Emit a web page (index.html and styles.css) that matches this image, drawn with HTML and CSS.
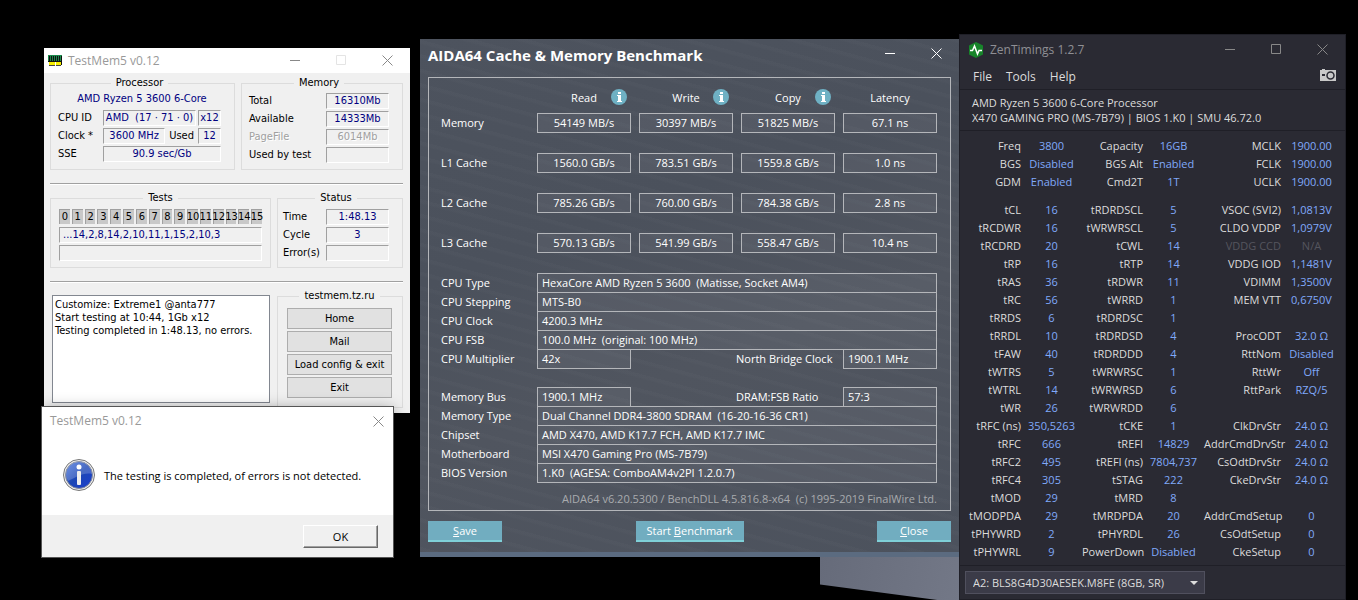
FILE: index.html
```html
<!DOCTYPE html>
<html lang="en">
<head>
    <meta charset="UTF-8">
    <meta name="viewport" content="width=device-width, initial-scale=1.0">
    <title>Desktop</title>
    <link rel="stylesheet" href="styles.css">
</head>
<body>
    <div class="wallpaper-shape"></div>

    <!-- TestMem5 -->
    <section class="window testmem">
        <header class="tm-titlebar">
            <svg class="tm-icon" width="14" height="11" viewBox="0 0 14 11">
                <path fill="#1b8a4c" d="M0 0h14v7H0z"/>
                <path fill="#111" d="M1 1h1v6H1zM3 1h1v6H3zM5 1h1v6H5zM7 1h1v6H7zM9 1h1v6H9zM11 1h1v6h-1zM0 6h14v1H0zM13 1h1v9h-1z"/>
                <path fill="#f5ee00" d="M1 7h6v3H1zM8 7h5v3H8z"/>
                <path fill="#444" d="M1 10h6v1H1zM8 10h5v1H8z"/>
            </svg>
            <span class="tm-title">TestMem5 v0.12</span>
            <button class="win-btn" aria-label="Minimize"><svg width="11" height="11"><path d="M0 5.500h10"/></svg></button>
            <button class="win-btn faint" aria-label="Maximize"><svg width="11" height="11"><path d="M.5.5h9v9h-9z"/></svg></button>
            <button class="win-btn" aria-label="Close"><svg width="11" height="11"><path d="M.5.5l10 10M10.500.5l-10 10"/></svg></button>
        </header>
        <div class="tm-body">
            <div class="tm-row">
                <fieldset class="processor">
                    <legend>Processor</legend>
                    <div class="cpu-name">AMD Ryzen 5 3600 6-Core</div>
                    <div class="tm-line"><span class="tm-label">CPU ID</span><span class="sunken grow">AMD&nbsp; (17 · 71 · 0)</span><span class="sunken small">x12</span></div>
                    <div class="tm-line"><span class="tm-label">Clock *</span><span class="sunken grow">3600 MHz</span><span class="used">Used</span><span class="sunken small">12</span></div>
                    <div class="tm-line"><span class="tm-label">SSE</span><span class="sunken grow">90.9 sec/Gb</span></div>
                </fieldset>
                <fieldset class="memory">
                    <legend>Memory</legend>
                    <div class="tm-line"><span>Total</span><span class="sunken value">16310Mb</span></div>
                    <div class="tm-line"><span>Available</span><span class="sunken value">14333Mb</span></div>
                    <div class="tm-line disabled"><span>PageFile</span><span class="sunken value">6014Mb</span></div>
                    <div class="tm-line"><span>Used by test</span><span class="sunken value"></span></div>
                </fieldset>
            </div>
            <hr>
            <div class="tm-row">
                <fieldset class="tests">
                    <legend>Tests</legend>
                    <div class="test-cells">
                        <span>0</span><span>1</span><span>2</span><span>3</span><span>4</span><span>5</span><span>6</span><span>7</span><span>8</span><span>9</span><span>10</span><span>11</span><span>12</span><span>13</span><span>14</span><span>15</span>
                    </div>
                    <div class="sunken sequence">...14,2,8,14,2,10,11,1,15,2,10,3</div>
                    <div class="sunken sequence"></div>
                </fieldset>
                <fieldset class="status">
                    <legend>Status</legend>
                    <div class="tm-line"><span>Time</span><span class="sunken value">1:48.13</span></div>
                    <div class="tm-line"><span>Cycle</span><span class="sunken value">3</span></div>
                    <div class="tm-line"><span>Error(s)</span><span class="sunken value"></span></div>
                </fieldset>
            </div>
            <hr>
            <div class="tm-row">
                <textarea class="log" aria-label="Log" readonly>Customize: Extreme1 @anta777
Start testing at 10:44, 1Gb x12
Testing completed in 1:48.13, no errors.</textarea>
                <fieldset class="links">
                    <legend>testmem.tz.ru</legend>
                    <button>Home</button>
                    <button>Mail</button>
                    <button>Load config &amp; exit</button>
                    <button>Exit</button>
                </fieldset>
            </div>
        </div>
    </section>

    <!-- Message box -->
    <section class="window msgbox">
        <header class="msg-titlebar">
            <span class="tm-title">TestMem5 v0.12</span>
            <button class="win-btn" aria-label="Close"><svg width="11" height="11"><path d="M.5.5l10 10M10.500.5l-10 10"/></svg></button>
        </header>
        <div class="msg-body">
            <svg width="32" height="32" viewBox="0 0 32 32">
                <defs>
                    <linearGradient id="ball" x1="0" y1="0" x2="1" y2="1">
                        <stop offset="0" stop-color="#4a78e0"/>
                        <stop offset=".5" stop-color="#1c46b4"/>
                        <stop offset="1" stop-color="#1d3fd0"/>
                    </linearGradient>
                </defs>
                <circle cx="16" cy="16" r="15.500" fill="#eee" stroke="#777"/>
                <circle cx="16" cy="16" r="13.500" fill="url(#ball)" stroke="#8a8f9c"/>
                <path fill="#fff" fill-opacity=".2" d="M3 16a13 13 0 0 1 26-1c-9-2-17 4-24 7a13 13 0 0 1-2-6z"/>
                <circle cx="16" cy="8" r="2.500" fill="#fff"/>
                <rect x="14" y="12" width="4" height="14" rx="1" fill="#eee"/>
            </svg>
            <span>The testing is completed, of errors is not detected.</span>
        </div>
        <footer class="msg-footer"><button>OK</button></footer>
    </section>

    <!-- AIDA64 -->
    <section class="window aida">
        <header class="aida-titlebar">
            <h1>AIDA64 Cache &amp; Memory Benchmark</h1>
            <button class="win-btn" aria-label="Minimize"><svg width="11" height="11"><path d="M0 5.500h10"/></svg></button>
            <button class="win-btn" aria-label="Close"><svg width="11" height="11"><path d="M.5.5l10 10M10.500.5l-10 10"/></svg></button>
        </header>
        <div class="aida-frame">
            <table class="bench">
                <thead>
                    <tr>
                        <td></td>
                        <th><div class="head"><span>Read</span><svg class="info" viewBox="0 0 16 16"><circle cx="8" cy="8" r="8"/><path d="M7 3h3v2H7zM6 6h4v6h1v1H6v-1h1V7H6z"/></svg></div></th>
                        <th><div class="head"><span>Write</span><svg class="info" viewBox="0 0 16 16"><circle cx="8" cy="8" r="8"/><path d="M7 3h3v2H7zM6 6h4v6h1v1H6v-1h1V7H6z"/></svg></div></th>
                        <th><div class="head"><span>Copy</span><svg class="info" viewBox="0 0 16 16"><circle cx="8" cy="8" r="8"/><path d="M7 3h3v2H7zM6 6h4v6h1v1H6v-1h1V7H6z"/></svg></div></th>
                        <th><div class="head"><span>Latency</span></div></th>
                    </tr>
                </thead>
                <tbody>
                    <tr><th>Memory</th><td><div>54149 MB/s</div></td><td><div>30397 MB/s</div></td><td><div>51825 MB/s</div></td><td><div>67.1 ns</div></td></tr>
                    <tr><th>L1 Cache</th><td><div>1560.0 GB/s</div></td><td><div>783.51 GB/s</div></td><td><div>1559.8 GB/s</div></td><td><div>1.0 ns</div></td></tr>
                    <tr><th>L2 Cache</th><td><div>785.26 GB/s</div></td><td><div>760.00 GB/s</div></td><td><div>784.38 GB/s</div></td><td><div>2.8 ns</div></td></tr>
                    <tr><th>L3 Cache</th><td><div>570.13 GB/s</div></td><td><div>541.99 GB/s</div></td><td><div>558.47 GB/s</div></td><td><div>10.4 ns</div></td></tr>
                </tbody>
            </table>
            <dl class="details">
                <div><dt>CPU Type</dt><dd>HexaCore AMD Ryzen 5 3600&nbsp; (Matisse, Socket AM4)</dd></div>
                <div><dt>CPU Stepping</dt><dd>MTS-B0</dd></div>
                <div><dt>CPU Clock</dt><dd>4200.3 MHz</dd></div>
                <div><dt>CPU FSB</dt><dd>100.0 MHz&nbsp; (original: 100 MHz)</dd></div>
                <div class="split"><dt>CPU Multiplier</dt><dd>42x</dd><dt>North Bridge Clock</dt><dd>1900.1 MHz</dd></div>
            </dl>
            <dl class="details">
                <div class="split"><dt>Memory Bus</dt><dd>1900.1 MHz</dd><dt>DRAM:FSB Ratio</dt><dd>57:3</dd></div>
                <div><dt>Memory Type</dt><dd>Dual Channel DDR4-3800 SDRAM&nbsp; (16-20-16-36 CR1)</dd></div>
                <div><dt>Chipset</dt><dd>AMD X470, AMD K17.7 FCH, AMD K17.7 IMC</dd></div>
                <div><dt>Motherboard</dt><dd>MSI X470 Gaming Pro (MS-7B79)</dd></div>
                <div><dt>BIOS Version</dt><dd>1.K0&nbsp; (AGESA: ComboAM4v2PI 1.2.0.7)</dd></div>
            </dl>
            <p class="version">AIDA64 v6.20.5300 / BenchDLL 4.5.816.8-x64&nbsp; (c) 1995-2019 FinalWire Ltd.</p>
        </div>
        <footer class="aida-footer">
            <button><u>S</u>ave</button>
            <button class="wide">Start <u>B</u>enchmark</button>
            <button><u>C</u>lose</button>
        </footer>
    </section>

    <!-- ZenTimings -->
    <section class="window zen">
        <header class="zen-titlebar">
            <svg width="16" height="16" viewBox="0 0 16 16">
                <path fill="#17842a" d="M8 0l7 3.500v9L8 16l-7-3.500v-9z"/>
                <path fill="none" stroke="#fff" stroke-width="1.500" d="M2 8.500h2.500L6.500 4l3 8 1.500-3.500h3"/>
            </svg>
            <span class="zen-title">ZenTimings 1.2.7</span>
            <button class="win-btn" aria-label="Minimize"><svg width="11" height="11"><path d="M0 5.500h10"/></svg></button>
            <button class="win-btn" aria-label="Maximize"><svg width="11" height="11"><path d="M.5.5h9v9h-9z"/></svg></button>
            <button class="win-btn" aria-label="Close"><svg width="11" height="11"><path d="M.5.5l10 10M10.500.5l-10 10"/></svg></button>
        </header>
        <nav class="zen-menu">
            <button>File</button>
            <button>Tools</button>
            <button>Help</button>
            <button class="camera" aria-label="Screenshot">
                <svg width="16" height="12" viewBox="0 0 16 12">
                    <path fill="#c8c8c8" d="M0 1h2V0h3v1h11v11H0z"/>
                    <path fill="#2a2a33" d="M2 5h3v2H2z"/>
                    <circle cx="10.500" cy="6.500" r="3.500" fill="#c8c8c8" stroke="#2a2a33" stroke-width="1.500"/>
                </svg>
            </button>
        </nav>
        <div class="zen-info">
            <div>AMD Ryzen 5 3600 6-Core Processor</div>
            <div>X470 GAMING PRO (MS-7B79) | BIOS 1.K0 | SMU 46.72.0</div>
        </div>
        <div class="zen-timings">
            <table>
                <tr><th>Freq</th><td>3800</td><th>Capacity</th><td>16GB</td><th class="last">MCLK</th><td>1900.00</td></tr>
                <tr><th>BGS</th><td>Disabled</td><th>BGS Alt</th><td>Enabled</td><th>FCLK</th><td>1900.00</td></tr>
                <tr><th>GDM</th><td>Enabled</td><th>Cmd2T</th><td>1T</td><th>UCLK</th><td>1900.00</td></tr>
            </table>
            <table>
                <tr><th>tCL</th><td>16</td><th>tRDRDSCL</th><td>5</td><th class="last">VSOC (SVI2)</th><td>1,0813V</td></tr>
                <tr><th>tRCDWR</th><td>16</td><th>tWRWRSCL</th><td>5</td><th>CLDO VDDP</th><td>1,0979V</td></tr>
                <tr><th>tRCDRD</th><td>20</td><th>tCWL</th><td>14</td><th class="off">VDDG CCD</th><td class="off">N/A</td></tr>
                <tr><th>tRP</th><td>16</td><th>tRTP</th><td>14</td><th>VDDG IOD</th><td>1,1481V</td></tr>
                <tr><th>tRAS</th><td>36</td><th>tRDWR</th><td>11</td><th>VDIMM</th><td>1,3500V</td></tr>
                <tr><th>tRC</th><td>56</td><th>tWRRD</th><td>1</td><th>MEM VTT</th><td>0,6750V</td></tr>
                <tr><th>tRRDS</th><td>6</td><th>tRDRDSC</th><td>1</td><td></td><td></td></tr>
                <tr><th>tRRDL</th><td>10</td><th>tRDRDSD</th><td>4</td><th>ProcODT</th><td>32.0 Ω</td></tr>
                <tr><th>tFAW</th><td>40</td><th>tRDRDDD</th><td>4</td><th>RttNom</th><td>Disabled</td></tr>
                <tr><th>tWTRS</th><td>5</td><th>tWRWRSC</th><td>1</td><th>RttWr</th><td>Off</td></tr>
                <tr><th>tWTRL</th><td>14</td><th>tWRWRSD</th><td>6</td><th>RttPark</th><td>RZQ/5</td></tr>
                <tr><th>tWR</th><td>26</td><th>tWRWRDD</th><td>6</td><td></td><td></td></tr>
                <tr><th>tRFC (ns)</th><td>350,5263</td><th>tCKE</th><td>1</td><th>ClkDrvStr</th><td>24.0 Ω</td></tr>
                <tr><th>tRFC</th><td>666</td><th>tREFI</th><td>14829</td><th>AddrCmdDrvStr</th><td>24.0 Ω</td></tr>
                <tr><th>tRFC2</th><td>495</td><th>tREFI (ns)</th><td>7804,737</td><th>CsOdtDrvStr</th><td>24.0 Ω</td></tr>
                <tr><th>tRFC4</th><td>305</td><th>tSTAG</th><td>222</td><th>CkeDrvStr</th><td>24.0 Ω</td></tr>
                <tr><th>tMOD</th><td>29</td><th>tMRD</th><td>8</td><td></td><td></td></tr>
                <tr><th>tMODPDA</th><td>29</td><th>tMRDPDA</th><td>20</td><th>AddrCmdSetup</th><td>0</td></tr>
                <tr><th>tPHYWRD</th><td>2</td><th>tPHYRDL</th><td>26</td><th>CsOdtSetup</th><td>0</td></tr>
                <tr><th>tPHYWRL</th><td>9</td><th>PowerDown</th><td>Disabled</td><th>CkeSetup</th><td>0</td></tr>
            </table>
        </div>
        <footer class="zen-footer">
            <div class="select-wrap">
                <select aria-label="Memory module">
                    <option>A2: BLS8G4D30AESEK.M8FE (8GB, SR)</option>
                </select>
            </div>
        </footer>
    </section>
</body>
</html>
```

FILE: styles.css
```css
* {
    box-sizing: border-box;
}
body {
    margin: 0;
    min-height: 100vh;
    overflow: hidden;
    background: #000;
    font-family: "Open Sans", sans-serif;
    font-size: 11px;
}
button, select, textarea {
    font: inherit;
    color: inherit;
    margin: 0;
    padding: 0;
}
.window {
    position: absolute;
}
.wallpaper-shape {
    position: absolute;
    left: 820px;
    top: 557px;
    width: 140px;
    height: 46px;
    background: linear-gradient(100deg, #666b7a, #737887);
    clip-path: polygon(0 0, 100% 0, 100% 100%, 0 60%);
}
.win-btn {
    display: flex;
    align-items: center;
    justify-content: center;
    width: 46px;
    height: 25px;
    border: 0;
    background: none;
    color: #888;
}
.win-btn svg {
    fill: none;
    stroke: currentColor;
}
.win-btn.faint {
    color: #e4e4e4;
}

/* TestMem5 */
.testmem {
    left: 44px;
    top: 48px;
    width: 366px;
    background: #f0f0f0;
    color: #000;
    font-family: "DejaVu Sans Condensed", "DejaVu Sans", sans-serif;
}
.tm-titlebar {
    display: flex;
    align-items: center;
    height: 25px;
    padding-left: 4px;
    background: #fff;
}
.tm-title {
    flex: 1;
    font-family: "Open Sans", sans-serif;
    font-size: 12px;
    line-height: 16px;
    color: #999;
}
.tm-icon + .tm-title {
    padding-left: 6px;
}
.tm-body {
    padding: 3px 7px 5px 6px;
}
.tm-row {
    display: flex;
    gap: 6px;
}
fieldset {
    min-width: 0;
    margin: 0;
    border: 1px solid #dcdcdc;
    padding: 0 13px 4px 7px;
}
legend {
    margin: 0 auto;
    padding: 0 5px;
    line-height: 14px;
}
.testmem hr {
    height: 2px;
    margin: 13px 0 6px;
    border: 0;
    border-top: 1px solid #a0a0a0;
    border-bottom: 1px solid #fff;
}
.processor {
    width: 185px;
}
.memory {
    flex: 1;
    padding-top: 3px;
}
.cpu-name {
    height: 20px;
    padding-left: 5px;
    line-height: 18px;
    text-align: center;
    color: #000080;
}
.tm-line {
    display: flex;
    justify-content: space-between;
    gap: 2px;
    height: 18px;
    line-height: 16px;
    white-space: nowrap;
}
.tm-label {
    width: 43px;
}
.used {
    padding: 0 2px;
}
.sunken {
    height: 16px;
    border: 1px solid;
    border-color: #a0a0a0 #fff #fff #a0a0a0;
    line-height: 14px;
    text-align: center;
    color: #000080;
}
.grow {
    flex: 1;
}
.small {
    width: 23px;
}
.value {
    width: 63px;
}
.disabled, .disabled .sunken {
    color: #a0a0a0;
}
.disabled {
    text-shadow: 1px 1px #fff;
}
.tests {
    width: 221px;
    padding: 4px 8px;
}
.status {
    flex: 1;
    padding: 4px 13px 4px 5px;
}
.test-cells {
    display: grid;
    grid-template-columns: repeat(16, minmax(0, 1fr));
    gap: 2px;
    height: 18px;
}
.test-cells span {
    display: flex;
    justify-content: center;
    height: 15px;
    border-left: 1px solid #a0a0a0;
    border-top: 1px solid #a0a0a0;
    background: #c8c8c8;
    line-height: 14px;
}
.sequence {
    margin-bottom: 2px;
    padding-left: 3px;
    text-align: left;
}
.log {
    width: 218px;
    height: 108px;
    margin: 6px 1px 0 2px;
    border: 1px solid #828790;
    padding: 2px;
    resize: none;
    background: #fff;
    line-height: 13px;
    white-space: pre;
    overflow: hidden;
}
.links {
    flex: 1;
    display: flex;
    flex-direction: column;
    gap: 2px;
    padding: 5px 10px 9px 9px;
}
.links button {
    width: 100%;
    height: 21px;
    border: 1px solid #adadad;
    background: #e1e1e1;
}

/* Message box */
.msgbox {
    left: 42px;
    top: 407px;
    width: 351px;
    background: #fff;
    box-shadow: 0 0 0 1px #555, 0 2px 14px rgba(0, 0, 0, 0.4);
}
.msg-titlebar {
    display: flex;
    align-items: center;
    height: 28px;
    padding-left: 8px;
}
.msg-titlebar .win-btn {
    width: 30px;
}
.msg-body {
    display: flex;
    align-items: center;
    gap: 9px;
    height: 80px;
    padding-left: 21px;
}
.msg-footer {
    display: flex;
    justify-content: flex-end;
    padding: 10px 15px 9px;
    background: #f0f0f0;
}
.msg-footer button {
    width: 75px;
    height: 23px;
    border: 1px solid;
    border-color: #fff #696969 #696969 #fff;
    box-shadow: inset -1px -1px #a0a0a0;
    background: #f0f0f0;
}

/* AIDA64 */
.aida {
    left: 420px;
    top: 39px;
    width: 539px;
    padding: 0 8px 10px;
    border-bottom: 5px solid #5b6b80;
    background: repeating-linear-gradient(195deg, rgba(255, 255, 255, 0.015) 0 3px, transparent 5px 14px),
        linear-gradient(160deg, #4d535e, #4b515c 35%, #50555f 60%, #4c525d);
    color: #fff;
}
.aida-titlebar {
    display: flex;
    align-items: center;
    height: 38px;
    padding-bottom: 10px;
}
.aida-titlebar .win-btn {
    color: #fff;
}
.aida-titlebar .win-btn:last-child {
    width: 30px;
    margin-left: 8px;
}
.aida h1 {
    flex: 1;
    margin: 4px 0 0;
    font-size: 15px;
    line-height: 20px;
}
.aida-frame {
    border: 1px solid #b4b6ba;
    padding: 11px 13px 3px 12px;
}
.bench {
    width: 100%;
    border-collapse: collapse;
    table-layout: fixed;
}
.bench th {
    padding: 0;
    font-weight: normal;
    text-align: left;
    vertical-align: top;
    line-height: 20px;
}
.bench thead th {
    width: 102px;
    padding: 0 0 8px 8px;
}
.bench td {
    padding: 0 0 20px 8px;
}
.bench thead td {
    padding: 0;
}
.bench td div {
    height: 20px;
    border: 1px solid #b4b6ba;
    background: rgba(255, 255, 255, 0.05);
    line-height: 18px;
    text-align: center;
}
.head {
    display: grid;
    grid-template-columns: 1fr auto 1fr;
    height: 16px;
    line-height: 17px;
}
.head span {
    grid-column: 2;
}
.info {
    width: 16px;
    height: 16px;
    justify-self: end;
    margin-right: 4px;
    fill: #fff;
}
.info circle {
    fill: #6fb1c4;
}
.details {
    margin: 0 0 19px;
}
.details div {
    display: flex;
    height: 19px;
    line-height: 20px;
}
.details dt {
    width: 96px;
}
.details dd {
    flex: 1;
    height: 20px;
    margin: 0;
    border: 1px solid #b4b6ba;
    padding-left: 4px;
    background: rgba(255, 255, 255, 0.05);
    line-height: 18px;
}
.details .split dd {
    flex: 0 0 94px;
}
.details .split dd + dt {
    width: 107px;
    margin-left: auto;
}
.version {
    margin: -10px 0 0;
    line-height: 16px;
    text-align: right;
    color: #a9abae;
}
.aida-footer {
    display: flex;
    justify-content: space-between;
    padding-top: 10px;
}
.aida-footer button {
    width: 74px;
    height: 21px;
    border: 0;
    border-bottom: 2px solid #7fd0d8;
    background: #71adc0;
}
.aida-footer .wide {
    width: 108px;
}

/* ZenTimings */
.zen {
    left: 959px;
    top: 34px;
    width: 387px;
    border: 1px solid #1f1f27;
    background: #2a2a33;
    color: #dcdcdc;
}
.zen-titlebar {
    display: flex;
    align-items: center;
    height: 29px;
    padding-left: 8px;
}
.zen-title {
    flex: 1;
    padding-left: 6px;
    font-size: 12px;
    color: #8f8f94;
}
.zen-menu {
    display: flex;
    gap: 14px;
    height: 26px;
    padding: 0 9px 0 13px;
    border-bottom: 1px solid #1f1f27;
    font-size: 12px;
}
.zen-menu button {
    border: 0;
    background: none;
}
.zen-menu .camera {
    margin-left: auto;
}
.zen-info {
    padding: 5px 12px;
    border-bottom: 1px solid #1f1f27;
    line-height: 15px;
}
.zen-timings {
    display: flex;
    flex-direction: column;
    gap: 10px;
    padding: 6px 3px 4px 0;
    border-bottom: 1px solid #1f1f27;
}
.zen-timings table {
    width: 100%;
    border-collapse: collapse;
    table-layout: fixed;
}
.zen-timings th, .zen-timings td {
    height: 18px;
    padding: 0;
    line-height: 18px;
    white-space: nowrap;
}
.zen-timings th {
    font-weight: normal;
    text-align: right;
}
.zen-timings th.last {
    width: 77px;
}
.zen-timings td {
    text-align: center;
    color: #80a9fa;
}
.zen-timings .off {
    color: #55555e;
}
.zen-footer {
    padding: 5px;
}
.select-wrap {
    position: relative;
    width: 240px;
}
.select-wrap::after {
    content: "";
    position: absolute;
    right: 7px;
    top: 10px;
    border: 4px solid transparent;
    border-top-color: #dcdcdc;
    border-bottom: 0;
}
.zen-footer select {
    appearance: none;
    display: block;
    width: 100%;
    height: 23px;
    border: 1px solid #50505e;
    padding: 0 7px;
    background: #3b3b48;
}
```
